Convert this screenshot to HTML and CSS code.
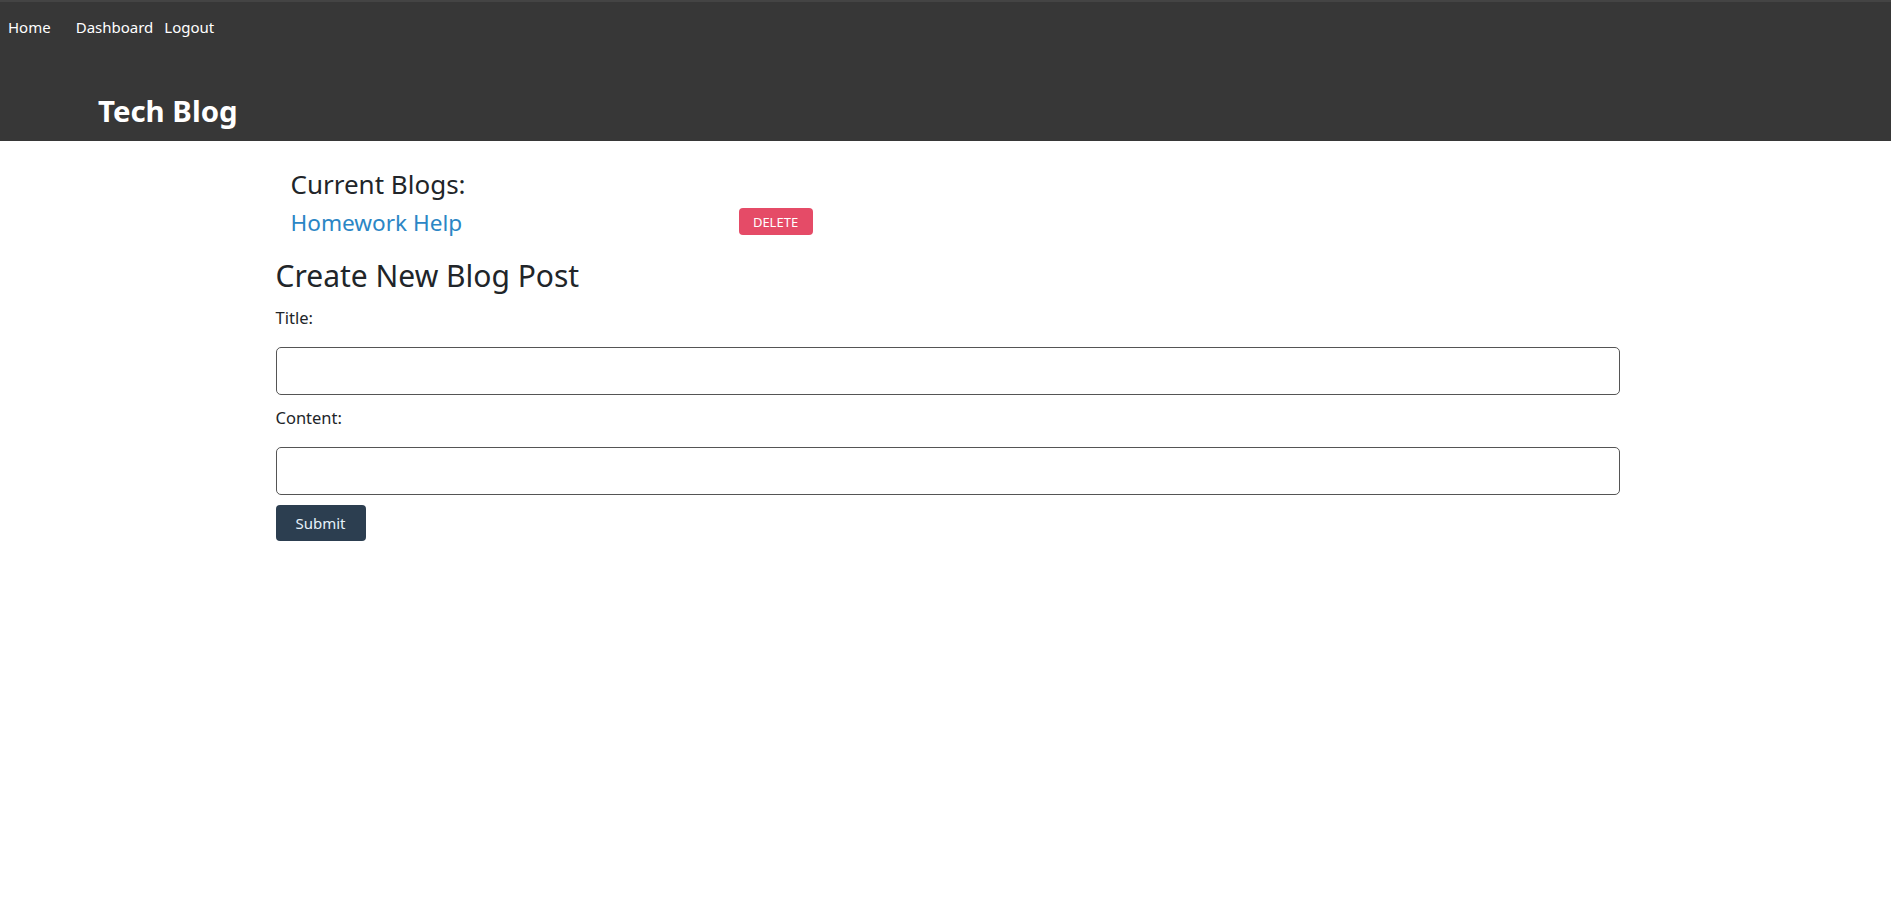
FILE: index.html
```html
<!DOCTYPE html>
<html lang="en">
<head>
<meta charset="utf-8">
<title>Tech Blog</title>
<link rel="stylesheet" href="styles.css">
</head>
<body>
<header class="site-header">
  <nav class="nav">
    <a class="nav-link nav-home" href="#">Home</a>
    <a class="nav-link nav-dash" href="#">Dashboard</a>
    <a class="nav-link" href="#">Logout</a>
  </nav>
  <h1 class="brand">Tech Blog</h1>
</header>
<main class="container">
  <section class="current">
    <h3 class="current-title">Current Blogs:</h3>
    <div class="blog-row">
      <a class="blog-link" href="#">Homework Help</a>
      <button class="btn-delete" type="button">DELETE</button>
    </div>
  </section>
  <form class="new-post">
    <h2 class="new-title">Create New Blog Post</h2>
    <label class="field-label" for="title">Title:</label>
    <input class="field-input" id="title" type="text">
    <label class="field-label field-label-next" for="content">Content:</label>
    <input class="field-input" id="content" type="text">
    <button class="btn-submit" type="submit">Submit</button>
  </form>
</main>
</body>
</html>
```

FILE: styles.css
```css
* { box-sizing: border-box; }
html, body { margin: 0; padding: 0; }
body {
  font-family: "Noto Sans", "Open Sans", sans-serif;
  color: #212529;
  background: #fff;
}
.site-header {
  background: #373737;
  border-top: 2px solid #444;
  height: 141px;
  padding: 0 0 0 8px;
}
.nav {
  display: flex;
  align-items: baseline;
  height: 42px;
  padding-top: 13px;
  font-size: 15px;
  line-height: 24px;
}
.nav-link { color: #fff; text-decoration: none; }
.nav-home { margin-right: 25px; }
.nav-dash { margin-right: 11px; }
.brand {
  margin: 0;
  padding: 47px 0 0 90px;
  font-size: 29.4px;
  line-height: 40px;
  font-weight: 700;
  color: #fff;
}
.container {
  width: 1348px;
  margin: 0 auto;
  padding-left: 4px;
}
.current { padding: 27px 0 0 15px; }
.current-title {
  margin: 0;
  font-size: 26px;
  font-weight: 400;
  line-height: 32px;
}
.blog-row {
  display: grid;
  grid-template-columns: 448px auto;
  align-items: start;
  margin-top: 7px;
}
.blog-link {
  color: #2b86c5;
  text-decoration: none;
  font-size: 22.6px;
  line-height: 32px;
}
.btn-delete {
  justify-self: start;
  margin-top: 1px;
  background: #e54b67;
  color: #fff;
  border: 0;
  border-radius: 4px;
  width: 74px;
  height: 27px;
  font-family: inherit;
  font-size: 13px;
  padding: 0;
}
.new-post { display: flex; flex-direction: column; align-items: flex-start; }
.new-title {
  margin: 19px 0 0;
  font-size: 30px;
  font-weight: 400;
  line-height: 36px;
}
.field-label {
  font-size: 16.5px;
  line-height: 24px;
  margin: 12px 0 17px;
}
.field-label-next { margin-top: 11px; }
.field-input {
  width: 100%;
  height: 48px;
  border: 1px solid #555;
  border-radius: 5px;
  font-family: inherit;
  font-size: 16px;
  padding: 0 12px;
}
.btn-submit {
  margin-top: 10px;
  width: 90px;
  height: 36px;
  background: #2c3e50;
  color: #e6f2fb;
  border: 0;
  border-radius: 4px;
  font-family: inherit;
  font-size: 15px;
}
```
